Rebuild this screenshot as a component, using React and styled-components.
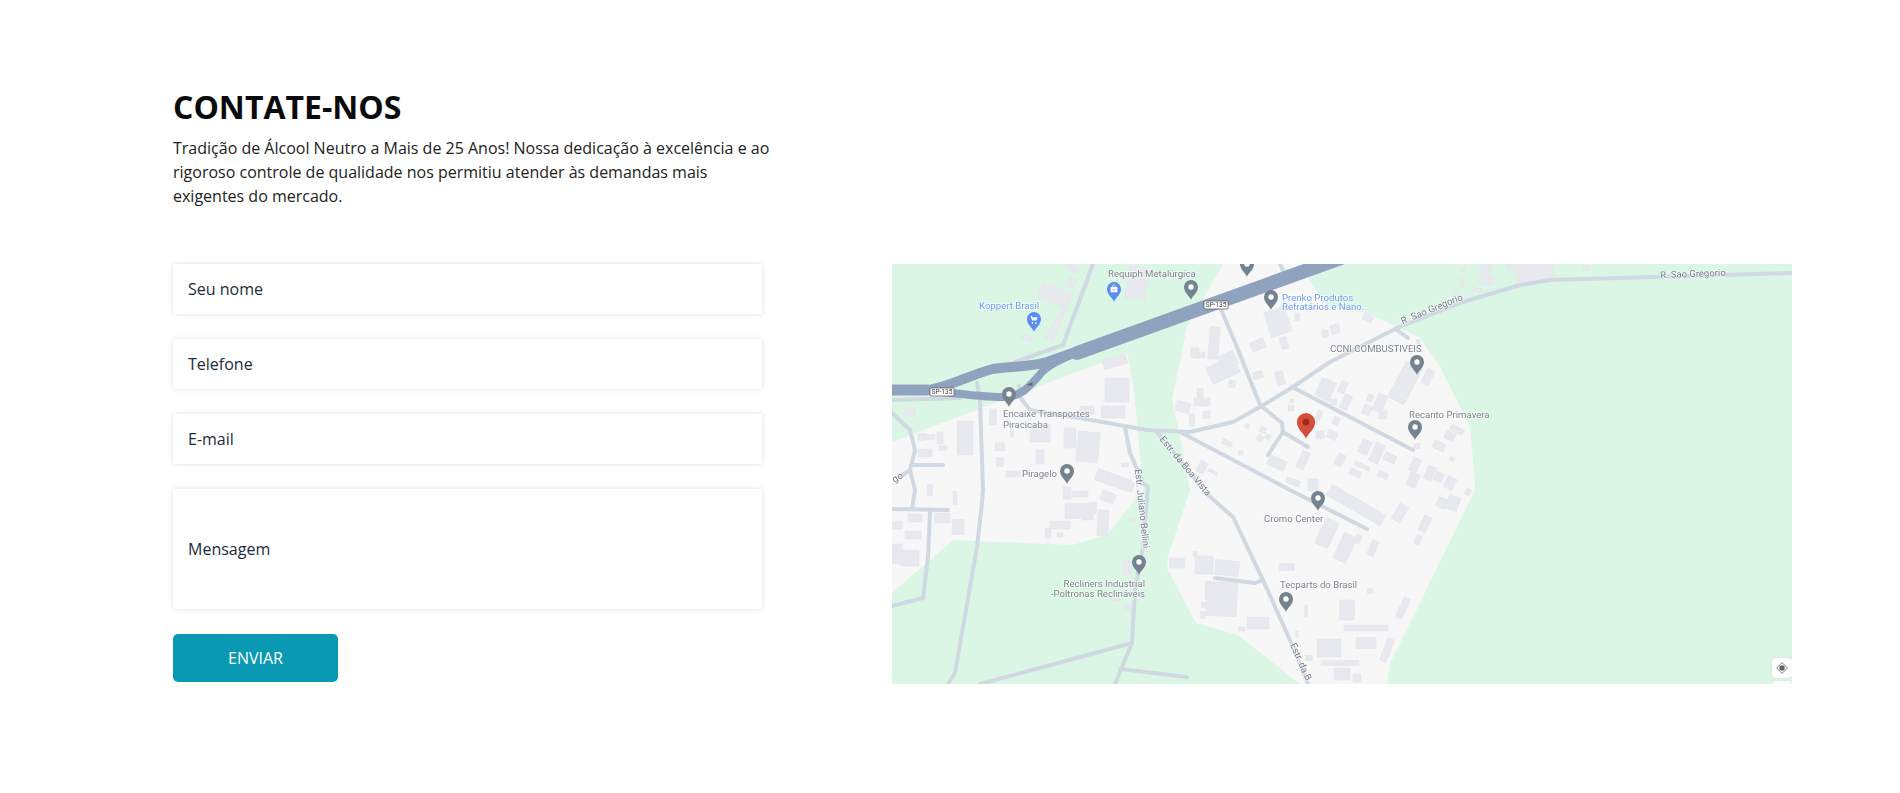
import React from 'react';
import styled, { createGlobalStyle } from 'styled-components';

const GlobalStyle = createGlobalStyle`
  html, body {
    margin: 0;
    padding: 0;
    background: #fff;
  }
  body {
    font-family: 'Open Sans', 'Liberation Sans', sans-serif;
    color: #212529;
  }
`;

const Page = styled.main`
  box-sizing: border-box;
  min-height: 793px;
  padding: 85px 108px 0 173px;
`;

const Intro = styled.header`
  width: 600px;
  margin-bottom: 56px;
`;

const Title = styled.h1`
  margin: 0 0 7px;
  font-size: 32px;
  line-height: 44px;
  font-weight: 700;
  color: #0a0a0a;
`;

const Lead = styled.p`
  margin: 0;
  font-size: 16px;
  line-height: 24px;
  color: #222;
`;

const Row = styled.section`
  display: flex;
  justify-content: space-between;
  align-items: flex-start;
`;

const Form = styled.form`
  width: 589px;
  flex: none;
  display: flex;
  flex-direction: column;
  align-items: flex-start;
  gap: 25px;
`;

const fieldStyles = `
  box-sizing: border-box;
  display: block;
  width: 100%;
  border: 0;
  outline: 0;
  background: #fff;
  padding: 0 15px;
  font-family: 'Open Sans', 'Liberation Sans', sans-serif;
  font-size: 16px;
  color: #212b3a;
  box-shadow: 0 0 5px rgba(0, 0, 0, 0.13);
  &::placeholder {
    color: #212b3a;
    opacity: 1;
  }
`;

const Input = styled.input`
  ${fieldStyles}
  height: 50px;
`;

const TextArea = styled.textarea`
  ${fieldStyles}
  height: 120px;
  padding-top: 49px;
  line-height: 22px;
  resize: none;
`;

const SendButton = styled.button`
  width: 165px;
  height: 48px;
  border: 0;
  border-radius: 5px;
  background: #0a99b3;
  color: #fff;
  font-family: 'Open Sans', 'Liberation Sans', sans-serif;
  font-size: 16px;
  cursor: pointer;
`;

const MapFrame = styled.div`
  position: relative;
  flex: none;
  width: 900px;
  height: 420px;
  overflow: hidden;
  background: #dcf6e6;
`;

const MapSvg = styled.svg`
  display: block;
  width: 900px;
  height: 420px;
  filter: blur(0.35px);
`;

const MapControls = styled.div`
  position: absolute;
  top: 394px;
  right: 0;
  display: flex;
  flex-direction: column;
  gap: 3px;
`;

const MapControl = styled.div`
  width: 20px;
  height: 20px;
  border-radius: 4px;
  background: #fff;
  display: flex;
  align-items: center;
  justify-content: center;
  box-shadow: 0 0 2px rgba(0, 0, 0, 0.12);
`;

const PlaceLabel = styled.text`
  font-family: Roboto, 'Liberation Sans', sans-serif;
  font-size: 9.6px;
  fill: ${({ $blue }) => ($blue ? '#6e9cf3' : '#7b838c')};
  stroke: #fff;
  stroke-width: 1.6px;
  stroke-opacity: 0.6;
  paint-order: stroke;
`;

const RoadLabel = styled.text`
  font-family: Roboto, 'Liberation Sans', sans-serif;
  font-size: 9.5px;
  fill: #747c8c;
  stroke: #fff;
  stroke-width: 1.6px;
  stroke-opacity: 0.7;
  paint-order: stroke;
`;

const ShieldText = styled.text`
  font-family: Roboto, 'Liberation Sans', sans-serif;
  font-size: 6.5px;
  fill: #444;
  text-anchor: middle;
`;

const line = pts => pts.map(p => p.join(',')).join(' ');

const landAreas = [
  [[0, 178], [235, 89], [241, 119], [246, 168], [251, 226], [215, 271], [180, 281], [61, 276], [0, 329]],
  [[331, 0], [295, 63], [280, 136], [288, 173], [298, 226], [275, 296], [276, 306], [304, 359], [346, 371], [408, 420], [495, 420], [498, 399], [528, 339], [583, 226], [583, 219], [578, 163], [548, 103], [528, 74], [476, 49], [435, 43], [416, 14], [411, 0]],
];

const roads = [
  [[900, 9], [658, 16], [628, 21], [571, 38], [505, 64], [438, 98], [401, 123], [368, 143], [341, 158], [298, 168], [255, 166], [188, 154], [138, 146], [128, 133], [127, 122]],
  [[328, 43], [345, 83], [368, 141], [390, 159], [391, 168], [416, 183]],
  [[391, 168], [376, 191]],
  [[388, 0], [393, 11]],
  [[400, 123], [521, 186]],
  [[265, 168], [316, 231], [341, 253], [371, 316], [401, 383], [416, 420]],
  [[288, 168], [398, 226], [475, 265]],
  [[233, 163], [238, 189], [251, 219], [256, 223], [251, 283], [243, 326], [240, 379], [223, 420]],
  [[240, 379], [88, 420]],
  [[228, 405], [295, 413]],
  [[85, 119], [88, 136], [91, 226], [90, 239], [85, 283], [63, 409], [56, 420]],
  [[0, 149], [18, 166], [23, 186], [18, 206], [8, 213]],
  [[18, 206], [23, 226], [20, 245]],
  [[0, 245], [56, 246]],
  [[38, 248], [36, 293], [31, 334], [0, 342]],
  [[21, 201], [51, 201]],
  [[201, 0], [171, 81], [123, 98]],
  [[323, 314], [363, 319], [371, 316]],
  [[505, 66], [516, 74]],
  [[0, 136], [68, 134]],
];

// cx, cy, w, h, rotation
const buildings = [
  [180, 19, 8, 8, 25], [180, 4, 12, 6, 25], [135, 74, 10, 5, 15], [245, 19, 20, 32, 8], [386, 58, 22, 26, -18],
  [405, 53, 5, 8, 0], [392, 79, 7, 12, -15], [366, 81, 14, 10, -25], [433, 69, 6, 6, 0], [322, 79, 10, 32, 5],
  [331, 106, 30, 18, -25], [336, 96, 16, 14, -25], [303, 89, 8, 10, 0], [310, 91, 6, 6, 0], [308, 129, 6, 10, 0],
  [310, 138, 16, 8, 0], [291, 143, 14, 10, 15], [300, 156, 5, 12, 0], [315, 151, 7, 7, 0], [340, 120, 7, 7, 15],
  [366, 111, 10, 7, -15], [388, 114, 8, 14, -15], [431, 124, 10, 18, 25], [400, 137, 4, 4, 0], [399, 144, 6, 6, 0],
  [426, 153, 5, 14, 25], [428, 171, 8, 8, 0], [371, 166, 6, 6, 30], [368, 174, 6, 6, 30], [376, 173, 5, 5, 30],
  [355, 162, 4, 4, 30], [335, 179, 10, 5, 25], [349, 189, 4, 4, 0], [385, 199, 18, 10, 25], [411, 196, 8, 18, 25],
  [401, 218, 14, 6, 20], [421, 221, 10, 12, 0], [310, 203, 8, 12, 30], [321, 208, 10, 3, 30],
  [223, 98, 24, 9, -15], [225, 126, 24, 24, 0], [195, 146, 14, 8, 0], [221, 148, 24, 12, 0], [178, 174, 12, 20, 0],
  [196, 183, 22, 30, 5], [148, 169, 20, 18, 0], [148, 193, 8, 14, 0], [101, 153, 7, 16, 0], [120, 169, 3, 8, 0],
  [108, 183, 9, 8, 0], [108, 198, 7, 9, 0], [73, 174, 16, 34, 0], [30, 173, 8, 7, 0], [38, 173, 10, 5, 0],
  [48, 174, 6, 12, 0], [33, 189, 14, 8, 0], [51, 184, 8, 5, 0], [18, 148, 10, 8, 0], [121, 210, 14, 6, 0],
  [221, 216, 35, 12, 20], [233, 201, 7, 4, 0], [187, 247, 28, 15, 0], [175, 229, 8, 12, 0], [188, 230, 16, 6, 0],
  [201, 244, 7, 12, 0], [211, 259, 11, 26, 3], [216, 233, 14, 10, 20], [228, 219, 28, 10, 20], [195, 254, 10, 4, 0],
  [168, 261, 20, 8, 0], [156, 269, 6, 10, 0], [168, 271, 6, 4, 0], [38, 226, 5, 12, 0], [50, 254, 15, 10, 0],
  [66, 263, 12, 15, 0], [63, 234, 4, 13, 0], [23, 254, 14, 8, 0], [21, 271, 16, 8, 0], [18, 294, 18, 16, 0],
  [5, 290, 10, 20, 0], [5, 261, 10, 8, 0], [241, 256, 6, 3, 0], [235, 304, 9, 14, 0], [223, 334, 9, 6, 0],
  [236, 343, 7, 5, 0], [285, 299, 15, 10, 0], [303, 290, 4, 5, 0], [312, 301, 18, 18, 0], [335, 304, 24, 15, 5],
  [330, 335, 30, 34, 3], [316, 326, 6, 18, 0], [312, 341, 5, 5, 0], [311, 351, 5, 7, 0], [366, 359, 22, 12, 0],
  [350, 365, 6, 4, 0], [395, 303, 15, 7, 0], [414, 347, 3, 12, 0], [405, 370, 3, 6, 0], [437, 384, 24, 18, 0],
  [417, 394, 7, 5, 0], [478, 327, 5, 5, 0], [455, 346, 15, 20, 0], [474, 364, 44, 6, 0], [474, 379, 20, 11, 0],
  [495, 386, 7, 24, 22], [511, 344, 7, 22, 25], [448, 399, 38, 5, 0], [450, 410, 16, 12, 0], [465, 414, 8, 8, 0],
  [508, 249, 10, 18, 30], [453, 284, 14, 28, 25], [466, 275, 5, 9, 25], [481, 284, 7, 16, 25], [533, 260, 8, 16, 25],
  [526, 276, 6, 9, 25], [576, 228, 5, 7, 25], [550, 239, 10, 10, 25], [561, 239, 12, 14, 20], [435, 269, 14, 28, 25],
  [464, 241, 62, 12, 30], [513, 119, 18, 40, 28], [536, 113, 8, 16, 25], [451, 123, 7, 12, 25], [454, 138, 8, 15, 25],
  [435, 126, 12, 20, 25], [441, 138, 7, 6, 0], [488, 139, 10, 18, 25], [478, 134, 5, 7, 25], [475, 146, 8, 10, 25],
  [491, 151, 8, 8, 0], [444, 157, 6, 8, 25], [473, 183, 10, 14, 25], [485, 189, 10, 20, 25], [498, 194, 12, 8, 25],
  [523, 201, 8, 14, 25], [521, 216, 10, 14, 25], [463, 209, 12, 6, 25], [470, 202, 16, 4, 25], [491, 211, 10, 6, 25],
  [538, 209, 8, 14, 25], [547, 213, 9, 9, 25], [558, 219, 10, 12, 25], [547, 182, 12, 8, 25], [560, 195, 5, 4, 25],
  [525, 182, 6, 5, 0], [565, 166, 14, 6, 25], [558, 172, 10, 8, 25], [440, 171, 10, 8, 25], [448, 196, 8, 12, 25],
  [643, 8, 38, 22, -5], [593, 13, 10, 16, 5], [600, 18, 5, 7, 5], [570, 19, 4, 8, 5], [571, 5, 4, 4, 0],
  [618, 3, 6, 6, 0], [694, 4, 6, 5, 0], [585, 26, 8, 4, 15], [563, 31, 3, 7, 10], [476, 54, 10, 7, 30],
  [443, 65, 9, 9, -15], [433, 70, 6, 6, -15], [595, 2, 10, 4, 5], [526, 78, 4, 5, 0],
];

const greyPins = [
  [299, 26], [355, 3], [379, 36], [117, 133], [175, 210], [525, 101], [523, 166], [426, 237], [247, 301], [394, 338],
];

const placeLabels = [
  { x: 216, y: 13, text: 'Requiph Metalúrgica' },
  { x: 111, y: 153, text: 'Encaixe Transportes' },
  { x: 111, y: 164, text: 'Piracicaba' },
  { x: 130, y: 213, text: 'Piragelo' },
  { x: 438, y: 88, text: 'CCNI COMBUSTIVEIS' },
  { x: 517, y: 154, text: 'Recanto Primavera' },
  { x: 372, y: 258, text: 'Cromo Center' },
  { x: 253, y: 323, text: 'Recliners Industrial', end: true },
  { x: 253, y: 333, text: '-Poltronas Reclináveis', end: true },
  { x: 388, y: 324, text: 'Tecparts do Brasil' },
  { x: 87, y: 45, text: 'Koppert Brasil', blue: true },
  { x: 390, y: 37, text: 'Prenko Produtos', blue: true },
  { x: 390, y: 46, text: 'Refratários e Nano...', blue: true },
];

const roadLabels = [
  { x: 801, y: 13, angle: -2, text: 'R. Sao Gregorio' },
  { x: 541, y: 48, angle: -22, text: 'R. Sao Gregorio' },
  { x: 291, y: 204, angle: 50, text: 'Estr. da Boa Vista' },
  { x: 247, y: 245, angle: 84, text: 'Estr. Juliano Bellini' },
  { x: 406, y: 399, angle: 66, text: 'Estr. da B' },
  { x: 7, y: 216, angle: -30, text: 'go' },
];

const PIN = 'M0 10C-1 6-7 3-7-3A7 7 0 1 1 7-3C7 3 1 6 0 10Z';

const GreyPin = ({ x, y }) => (
  <g transform={`translate(${x} ${y})`}>
    <path d={PIN} fill="#74838f" />
    <circle cy="-3" r="2.7" fill="#fff" />
  </g>
);

const Shield = ({ x, y }) => (
  <g transform={`translate(${x} ${y})`}>
    <rect x="-12" y="-4" width="24" height="8" rx="1" fill="#fff" stroke="#555" strokeWidth="0.7" />
    <ShieldText y="2.3">SP-135</ShieldText>
  </g>
);

const MapDrawing = () => (
  <MapSvg viewBox="0 0 900 420">
    {landAreas.map((pts, i) => (
      <polygon key={i} points={line(pts)} fill="#f7f7f8" />
    ))}
    <g fill="#e8e9ee" stroke="#e2e3e9" strokeWidth="0.5">
      <polygon points="151,18 181,29 161,79 153,74 171,43 145,34" />
      {buildings.map(([cx, cy, w, h, r], i) => (
        <rect key={i} x={cx - w / 2} y={cy - h / 2} width={w} height={h} transform={`rotate(${r} ${cx} ${cy})`} />
      ))}
    </g>
    <g fill="none" stroke="#d0d8e2" strokeWidth="4" strokeLinecap="round" strokeLinejoin="round">
      {roads.map((pts, i) => (
        <polyline key={i} points={line(pts)} />
      ))}
    </g>
    <g fill="none" stroke="#8fa3bf" strokeLinecap="round" strokeLinejoin="round">
      <path strokeWidth="14" d="M185 89L460 -10" />
      <path strokeWidth="10" d="M-5 126L35 126C55 124 80 110 101 105C115 102 135 104 155 98L195 84" />
      <path strokeWidth="8" d="M35 126C55 128 85 133 111 133C130 133 138 122 150 108C158 100 175 92 195 85" />
      <path strokeWidth="11" d="M-5 126L35 126" />
    </g>
    <path d="M134 121l7-3-1 2 1 2z" fill="#5d6a7c" />
    <Shield x={324} y={41} />
    <Shield x={50} y={128} />
    {roadLabels.map(({ x, y, angle, text }, i) => (
      <RoadLabel key={i} textAnchor="middle" transform={`translate(${x} ${y}) rotate(${angle})`}>
        {text}
      </RoadLabel>
    ))}
    {placeLabels.map(({ x, y, text, blue, end }, i) => (
      <PlaceLabel key={i} x={x} y={y} $blue={blue} textAnchor={end ? 'end' : 'start'}>
        {text}
      </PlaceLabel>
    ))}
    {greyPins.map(([x, y], i) => (
      <GreyPin key={i} x={x} y={y} />
    ))}
    <g transform="translate(142 58)">
      <path d={PIN} fill="#5b8def" />
      <path d="M-3.6-6h1.4l.6 1.3H3.6L2.4-1.4H-1.8zM-1.6.2a.8.8 0 1 0 .01 0zM1.8.2a.8.8 0 1 0 .01 0z" fill="#fff" />
    </g>
    <g transform="translate(222 28)">
      <path d={PIN} fill="#5b8def" />
      <path d="M-3.4-5H3.4V.3H-3.4z" fill="#fff" />
      <path d="M-1.5-5c0-2.6 3-2.6 3 0" fill="none" stroke="#fff" strokeWidth="0.8" />
      <path d="M-1.5-3c.4 1.4 2.6 1.4 3 0" fill="none" stroke="#5b8def" strokeWidth="0.7" />
    </g>
    <g transform="translate(414 162) scale(1.3)">
      <path d={PIN} fill="#d4503c" />
      <circle cy="-3" r="2.6" fill="#a3291b" />
    </g>
  </MapSvg>
);

const LocateIcon = () => (
  <svg width="12" height="12" viewBox="0 0 12 12">
    <path d="M6 .6L11.4 6 6 11.4.6 6z" fill="none" stroke="#6b7280" strokeWidth="0.9" />
    <circle cx="6" cy="6" r="2.7" fill="#5f6368" />
  </svg>
);

export default function App() {
  return (
    <>
      <GlobalStyle />
      <Page>
        <Intro>
          <Title>CONTATE-NOS</Title>
          <Lead>
            Tradição de Álcool Neutro a Mais de 25 Anos! Nossa dedicação à excelência e ao rigoroso controle de
            qualidade nos permitiu atender às demandas mais exigentes do mercado.
          </Lead>
        </Intro>
        <Row>
          <Form onSubmit={e => e.preventDefault()}>
            <Input type="text" placeholder="Seu nome" />
            <Input type="tel" placeholder="Telefone" />
            <Input type="email" placeholder="E-mail" />
            <TextArea placeholder="Mensagem" />
            <SendButton type="submit">ENVIAR</SendButton>
          </Form>
          <MapFrame>
            <MapDrawing />
            <MapControls>
              <MapControl>
                <LocateIcon />
              </MapControl>
              <MapControl />
            </MapControls>
          </MapFrame>
        </Row>
      </Page>
    </>
  );
}
